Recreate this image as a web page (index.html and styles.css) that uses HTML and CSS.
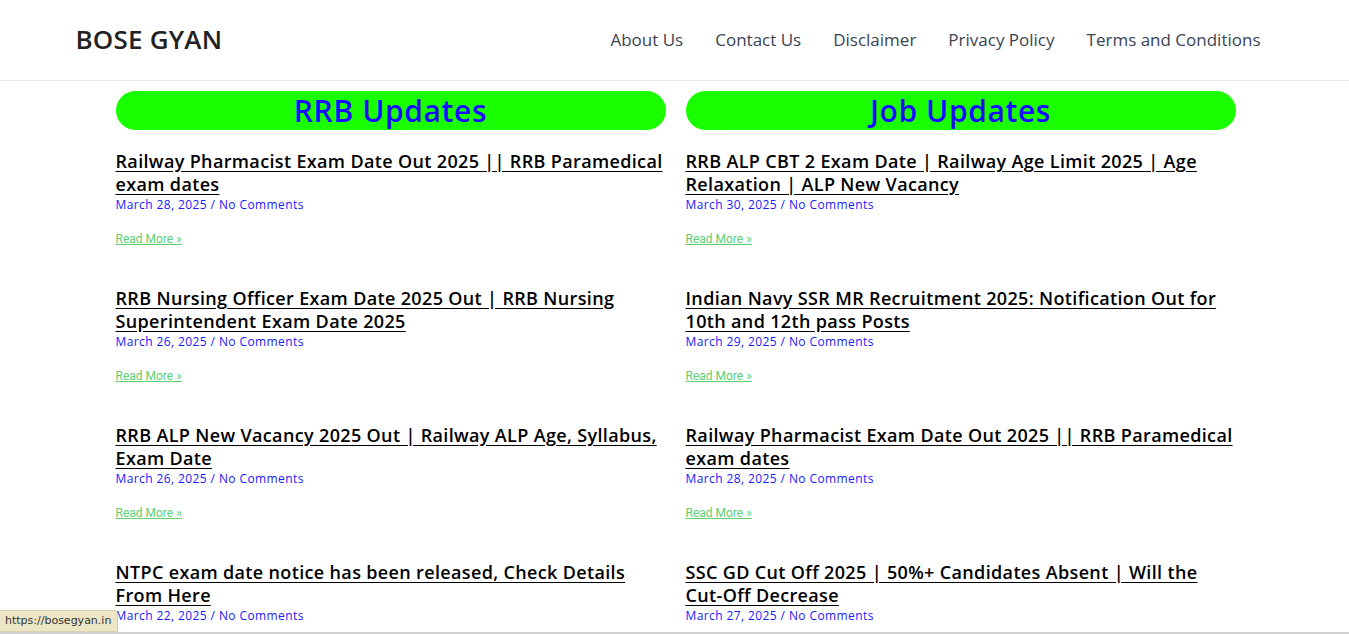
FILE: index.html
```html
<!DOCTYPE html>
<html lang="en">
<head>
    <meta charset="UTF-8">
    <meta name="viewport" content="width=device-width, initial-scale=1.0">
    <title>Bose Gyan</title>
    <link rel="stylesheet" href="styles.css">
</head>
<body>
    <header class="site-header">
        <div class="header-inner">
            <a href="#" class="site-title">BOSE GYAN</a>
            <nav class="main-nav">
                <a href="#">About Us</a>
                <a href="#">Contact Us</a>
                <a href="#">Disclaimer</a>
                <a href="#">Privacy Policy</a>
                <a href="#">Terms and Conditions</a>
            </nav>
        </div>
    </header>

    <main class="content">
        <section class="column">
            <h2 class="column-title">RRB Updates</h2>

            <article class="post">
                <h3 class="post-title"><a href="#">Railway Pharmacist Exam Date Out 2025 || RRB Paramedical exam dates </a></h3>
                <div class="post-meta">March 28, 2025 / No Comments</div>
                <a href="#" class="read-more">Read More »</a>
            </article>

            <article class="post">
                <h3 class="post-title"><a href="#">RRB Nursing Officer Exam Date 2025 Out | RRB Nursing Superintendent Exam Date 2025</a></h3>
                <div class="post-meta">March 26, 2025 / No Comments</div>
                <a href="#" class="read-more">Read More »</a>
            </article>

            <article class="post">
                <h3 class="post-title"><a href="#">RRB ALP New Vacancy 2025 Out | Railway ALP Age, Syllabus, Exam Date</a></h3>
                <div class="post-meta">March 26, 2025 / No Comments</div>
                <a href="#" class="read-more">Read More »</a>
            </article>

            <article class="post">
                <h3 class="post-title"><a href="#">NTPC exam date notice has been released, Check Details From Here</a></h3>
                <div class="post-meta">March 22, 2025 / No Comments</div>
                <a href="#" class="read-more">Read More »</a>
            </article>
        </section>

        <section class="column">
            <h2 class="column-title">Job Updates</h2>

            <article class="post">
                <h3 class="post-title"><a href="#">RRB ALP CBT 2 Exam Date | Railway Age Limit 2025 | Age Relaxation | ALP New Vacancy</a></h3>
                <div class="post-meta">March 30, 2025 / No Comments</div>
                <a href="#" class="read-more">Read More »</a>
            </article>

            <article class="post">
                <h3 class="post-title"><a href="#">Indian Navy SSR MR Recruitment 2025: Notification Out for 10th and 12th pass Posts</a></h3>
                <div class="post-meta">March 29, 2025 / No Comments</div>
                <a href="#" class="read-more">Read More »</a>
            </article>

            <article class="post">
                <h3 class="post-title"><a href="#">Railway Pharmacist Exam Date Out 2025 || RRB Paramedical exam dates </a></h3>
                <div class="post-meta">March 28, 2025 / No Comments</div>
                <a href="#" class="read-more">Read More »</a>
            </article>

            <article class="post">
                <h3 class="post-title"><a href="#">SSC GD Cut Off 2025 | 50%+ Candidates Absent | Will the Cut-Off Decrease</a></h3>
                <div class="post-meta">March 27, 2025 / No Comments</div>
                <a href="#" class="read-more">Read More »</a>
            </article>
        </section>
    </main>

    <div class="status-bar">https://bosegyan.in</div>
</body>
</html>
```

FILE: styles.css
```css
body {
    margin: 0;
    font-family: 'Open Sans', 'Noto Sans', sans-serif;
    background-color: #fff;
    color: #000;
}

a {
    text-decoration: none;
}

.site-header {
    border-bottom: 1px solid #e8e8e8;
}

.header-inner {
    max-width: 1200px;
    margin: 0 auto;
    height: 78px;
    padding: 0 0 2px 2px;
    display: flex;
    align-items: center;
    justify-content: space-between;
}

.site-title {
    font-size: 26px;
    font-weight: 600;
    color: #222;
    letter-spacing: 0.2px;
}

.main-nav {
    display: flex;
    padding-right: 15px;
}

.main-nav a {
    font-size: 17px;
    color: #3a4453;
    padding: 0 16px;
}

.main-nav a:last-child {
    padding-right: 0;
}

.content {
    width: 1120px;
    margin: 10px auto 0;
    padding-left: 2px;
    display: grid;
    grid-template-columns: 1fr 1fr;
    gap: 20px;
}

.column-title {
    margin: 0 0 20px;
    height: 39px;
    line-height: 39px;
    border-radius: 20px;
    background-color: #1aff00;
    color: #1a0dff;
    text-align: center;
    font-size: 30px;
    font-weight: 600;
    letter-spacing: 0.6px;
}

.post {
    height: 137px;
}

.post-title {
    margin: 0;
    font-size: 18px;
    font-weight: 600;
    line-height: 23px;
    letter-spacing: 0.35px;
}

.post-title a {
    color: #000;
    text-decoration: underline;
    text-underline-offset: 3px;
}

.post-meta {
    font-size: 12px;
    line-height: 18px;
    letter-spacing: 0.4px;
    color: #1a1aff;
    margin-bottom: 12px;
}

.read-more {
    font-family: Roboto, sans-serif;
    font-size: 12px;
    line-height: 16px;
    color: #61ce70;
    text-decoration: underline;
}

.status-bar {
    position: fixed;
    left: 0;
    bottom: 2px;
    padding: 3px 6px 4px 5px;
    background-color: #ece6c4;
    border: 1px solid #d9d2b0;
    border-left: none;
    border-radius: 0 4px 0 0;
    font-family: 'DejaVu Sans', sans-serif;
    font-size: 11px;
    color: #333;
}

body::after {
    content: '';
    position: fixed;
    left: 0;
    right: 0;
    bottom: 0;
    height: 2px;
    background-color: #d0d0d0;
}
```
